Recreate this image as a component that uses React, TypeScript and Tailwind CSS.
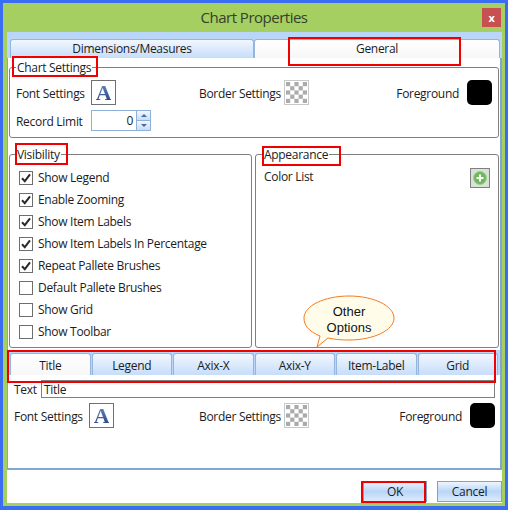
const visibility = [
  ["Show Legend", true],
  ["Enable Zooming", true],
  ["Show Item Labels", true],
  ["Show Item Labels In Percentage", true],
  ["Repeat Pallete Brushes", true],
  ["Default Pallete Brushes", false],
  ["Show Grid", false],
  ["Show Toolbar", false],
] as const;

const subTabs = ["Title", "Legend", "Axix-X", "Axix-Y", "Item-Label", "Grid"];

const FontButton = () => (
  <div className="flex h-[25px] w-[25px] items-center justify-center border border-[#707070] bg-white">
    <span className="bg-gradient-to-b from-[#6f8cc4] to-[#23407f] bg-clip-text font-['Liberation_Serif',serif] text-[22px] leading-none font-bold text-transparent">
      A
    </span>
  </div>
);

const Checker = () => (
  <svg width="25" height="25" viewBox="0 0 25 25">
    <rect x="0.5" y="0.5" width="24" height="24" fill="#fff" stroke="#c8c8c8" />
    {[0, 1, 2, 3, 4].flatMap((r) =>
      [0, 1, 2, 3, 4]
        .filter((c) => (r + c) % 2 === 0)
        .map((c) => <rect key={`${r}-${c}`} x={2 + c * 4.2} y={2 + r * 4.2} width="4.2" height="4.2" fill="#ababab" />),
    )}
  </svg>
);

const Swatch = () => <div className="h-[25px] w-[25px] rounded-[5px] bg-black" />;

const SettingsRow = ({ className }: { className: string }) => (
  <div className={`flex items-center ${className}`}>
    <span className="w-[75px] pt-[2px]">Font Settings</span>
    <FontButton />
    <span className="ml-[85px] w-[85px] pt-[2px]">Border Settings</span>
    <Checker />
    <span className="mr-[8px] ml-auto pt-[2px]">Foreground</span>
    <Swatch />
  </div>
);

const Box = ({ checked }: { checked: boolean }) => (
  <div className="flex h-[14px] w-[14px] items-center justify-center border border-[#6e6e6e] bg-white">
    {checked && (
      <svg width="12" height="12" viewBox="0 0 12 12">
        <path d="M2 6.2 L4.8 9.2 L10 2.4" fill="none" stroke="#2b2b2b" strokeWidth="2" />
      </svg>
    )}
  </div>
);

export default function App() {
  return (
    <div className="relative flex h-[510px] w-[508px] flex-col overflow-hidden border-[3px] border-b-4 border-[#3a6df0] bg-[#a5cf61] font-['Open_Sans',sans-serif] text-[12px] leading-4 tracking-[-0.3px] text-[#1c1c1c]">
      {/* title bar */}
      <div className="flex h-[29px] shrink-0 items-center">
        <div className="flex-1 pb-[1px] pl-[23px] text-center text-[15px] tracking-[-0.5px] text-[#36412a]">Chart Properties</div>
        <div className="mr-[4px] mb-[1px] flex h-[19px] w-[19px] items-center justify-center bg-[#c75050] text-[11px] leading-none font-bold text-white">
          x
        </div>
      </div>

      <div className="mr-[3px] mb-[3px] ml-[4px] flex flex-1 flex-col bg-white">
        {/* main tabs */}
        <div className="flex h-[26px] shrink-0 items-end bg-[#b9d5f7] pr-[2px] pl-[3px]">
          <div className="flex h-[19px] w-[244px] items-center justify-center rounded-t-[3px] border border-b-0 border-[#93b5de] bg-gradient-to-b from-[#f2f7fe] to-[#c6ddfa]">
            Dimensions/Measures
          </div>
          <div className="flex h-[19px] flex-1 items-center justify-center rounded-t-[3px] border border-b-0 border-[#93b5de] bg-gradient-to-b from-white to-[#f7f7f7]">
            General
          </div>
        </div>

        <div className="flex h-[412px] shrink-0 flex-col border-r-2 border-b-2 border-l border-[#82a5d1] bg-white">
          <fieldset className="mx-[1px] mt-[1px] h-[79px] shrink-0 rounded-[3px] border border-[#808080] px-[6px]">
            <legend className="relative top-[1px] px-[1px]">Chart Settings</legend>
            <div className="mt-[5px] flex items-center">
              <span className="w-[75px] pt-[2px]">Font Settings</span>
              <FontButton />
              <span className="ml-[83px] w-[85px] pt-[2px]">Border Settings</span>
              <Checker />
              <span className="mr-[8px] ml-auto pt-[2px]">Foreground</span>
              <Swatch />
            </div>
            <div className="mt-[5px] flex items-center">
              <span className="w-[75px] pt-[2px]">Record Limit</span>
              <div className="flex h-[21px] w-[60px] border border-[#8fb0d8] bg-white">
                <span className="flex-1 pt-[2px] pr-[3px] text-right">0</span>
                <div className="flex w-[14px] flex-col border-l border-[#8fb0d8]">
                  <div className="flex flex-1 items-center justify-center bg-gradient-to-b from-[#f2f7fe] to-[#c6ddfa]">
                    <div className="h-0 w-0 border-x-[3px] border-b-[3px] border-x-transparent border-b-[#4a6c98]" />
                  </div>
                  <div className="flex flex-1 items-center justify-center border-t border-[#8fb0d8] bg-gradient-to-b from-[#f2f7fe] to-[#c6ddfa]">
                    <div className="h-0 w-0 border-x-[3px] border-t-[3px] border-x-transparent border-t-[#4a6c98]" />
                  </div>
                </div>
              </div>
            </div>
          </fieldset>

          <div className="mx-[1px] mt-[8px] flex h-[202px] shrink-0 gap-[3px]">
            <fieldset className="w-[243px] rounded-[3px] border border-[#808080] pl-[9px]">
              <legend className="relative top-[1px] -ml-[3px] px-[1px]">Visibility</legend>
              <div className="mt-[5px] flex flex-col">
                {visibility.map(([label, checked]) => (
                  <div key={label} className="flex h-[22px] items-center gap-[5px]">
                    <Box checked={checked} />
                    <span>{label}</span>
                  </div>
                ))}
              </div>
            </fieldset>
            <fieldset className="flex-1 rounded-[3px] border border-[#808080] px-[8px]">
              <legend className="relative top-[1px] -ml-[1px] px-[1px]">Appearance</legend>
              <div className="mt-[6px] flex items-start justify-between">
                <span className="mt-[1px]">Color List</span>
                <div className="flex h-[20px] w-[20px] items-center justify-center border border-[#808080] bg-[#d9e2d9]">
                  <svg width="14" height="14" viewBox="0 0 14 14">
                    <circle cx="7" cy="7" r="6.5" fill="#6fb95c" stroke="#9ccf8f" />
                    <path d="M7 3.5 V10.5 M3.5 7 H10.5" stroke="#fff" strokeWidth="2" />
                  </svg>
                </div>
              </div>
            </fieldset>
          </div>

          {/* option tabs */}
          <div className="mt-[2px] flex h-[25px] shrink-0 items-end gap-[1px] bg-[#b9d5f7] pr-[2px] pl-[2px]">
            {subTabs.map((tab, i) => (
              <div
                key={tab}
                className={
                  i === 0
                    ? "flex h-[22px] flex-1 items-center justify-center rounded-t-[3px] border border-b-0 border-[#93b5de] bg-gradient-to-b from-white to-[#f7f7f7] pt-[2px]"
                    : "flex h-[22px] flex-1 items-center justify-center rounded-t-[3px] border border-b-0 border-[#93b5de] bg-gradient-to-b from-[#f2f7fe] to-[#c6ddfa] pt-[2px]"
                }
              >
                {tab}
              </div>
            ))}
          </div>

          <div className="mt-[5px] flex h-[18px] shrink-0 items-center pr-[5px] pl-[6px]">
            <span className="w-[27px] pt-[2px]">Text</span>
            <div className="flex h-[18px] flex-1 items-center border border-[#808080] pt-[2px] pl-[2px]">Title</div>
          </div>

          <SettingsRow className="mt-[5px] pr-[5px] pl-[6px]" />
        </div>

        {/* footer */}
        <div className="flex flex-1 items-start justify-end pt-[11px]">
          <div className="flex h-[21px] w-[64px] items-center justify-center border border-[#7da2ce] bg-gradient-to-b from-[#eef5fe] via-[#b9d5f7] to-[#dcebfc]">
            OK
          </div>
          <div className="ml-[10px] flex h-[21px] w-[65px] items-center justify-center border border-[#7da2ce] bg-gradient-to-b from-[#eef5fe] via-[#b9d5f7] to-[#dcebfc]">
            Cancel
          </div>
        </div>
      </div>

      {/* red annotation boxes */}
      <div className="absolute top-[53px] left-[9px] h-[21px] w-[86px] border-2 border-[#f00000]" />
      <div className="absolute top-[34px] left-[285px] h-[29px] w-[173px] border-2 border-[#f00000]" />
      <div className="absolute top-[140px] left-[12px] h-[22px] w-[53px] border-2 border-[#f00000]" />
      <div className="absolute top-[143px] left-[259px] h-[20px] w-[79px] border-2 border-[#f00000]" />
      <div className="absolute top-[347px] left-[4px] h-[33px] w-[489px] border-2 border-[#f00000]" />
      <div className="absolute top-[478px] left-[358px] h-[22px] w-[65px] border-2 border-[#f00000]" />

      {/* callout */}
      <div className="absolute top-[292px] left-[300px] h-[54px] w-[92px]">
        <svg width="92" height="54" viewBox="0 0 92 54" className="absolute inset-0">
          <path
            d="M14 52 L17 41 C5 36 1 30 1 23 C1 11 21 1 46 1 C71 1 91 11 91 23 C91 35 71 45 46 45 C36 45 30 44 25 43 Z"
            fill="#fffde9"
            stroke="#f47a1f"
          />
        </svg>
        <div className="absolute inset-x-0 top-[9px] text-center font-['Liberation_Sans',sans-serif] text-[13px] leading-[16px] tracking-normal text-[#111]">
          Other
          <br />
          Options
        </div>
      </div>
    </div>
  );
}
